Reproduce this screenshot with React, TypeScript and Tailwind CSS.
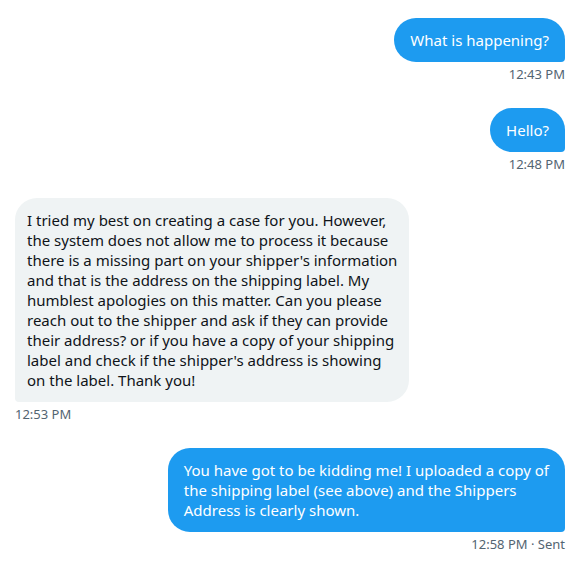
import React from 'react';

type Msg = {
    id: number;
    mine: boolean;
    lines: string[];
    time: string;
};

const messages: Msg[] = [
    { id: 1, mine: true, lines: ['What is happening?'], time: '12:43 PM' },
    { id: 2, mine: true, lines: ['Hello?'], time: '12:48 PM' },
    {
        id: 3,
        mine: false,
        lines: [
            'I tried my best on creating a case for you. However,',
            'the system does not allow me to process it because',
            "there is a missing part on your shipper's information",
            'and that is the address on the shipping label. My',
            'humblest apologies on this matter. Can you please',
            'reach out to the shipper and ask if they can provide',
            'their address? or if you have a copy of your shipping',
            "label and check if the shipper's address is showing",
            'on the label. Thank you!',
        ],
        time: '12:53 PM',
    },
    {
        id: 4,
        mine: true,
        lines: [
            'You have got to be kidding me! I uploaded a copy of',
            'the shipping label (see above) and the Shippers',
            'Address is clearly shown.',
        ],
        time: '12:58 PM · Sent',
    },
];

export default function App() {
    return (
        <div
            className="min-h-screen bg-white px-[15px] pt-[18px] flex flex-col gap-[26px]"
            style={{ fontFamily: '"Segoe UI", "Noto Sans", Roboto, sans-serif' }}
        >
            {messages.map(m => (
                <div key={m.id} className={`flex flex-col ${m.mine ? 'items-end' : 'items-start'}`}>
                    <div
                        className={
                            m.mine
                                ? 'bg-[#1d9bf0] text-white rounded-[22px] rounded-br-[4px] px-4 py-3 text-[15px] leading-5'
                                : 'bg-[#eff3f4] text-[#0f1419] rounded-[22px] rounded-bl-[4px] px-3 py-3 text-[15px] leading-5'
                        }
                    >
                        {m.lines.map((l, i) => (
                            <div key={i} className="whitespace-nowrap">{l}</div>
                        ))}
                    </div>
                    <div className="mt-1 text-[13px] leading-4 text-[#536471]">{m.time}</div>
                </div>
            ))}
        </div>
    );
}
